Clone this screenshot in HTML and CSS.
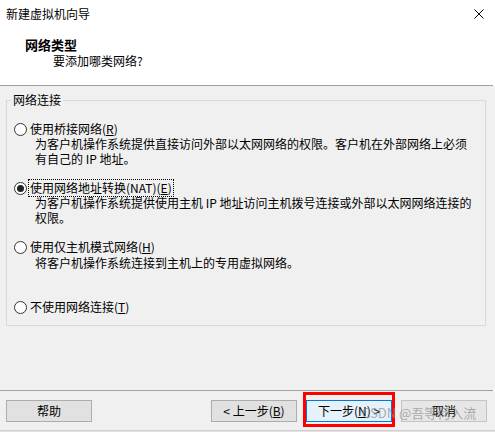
FILE: index.html
```html
<!DOCTYPE html>
<html lang="zh-CN">
<head>
<meta charset="utf-8">
<title>新建虚拟机向导</title>
<link rel="stylesheet" href="styles.css">
</head>
<body>
<div class="window">
  <div class="titlebar">
    <span class="title">新建虚拟机向导</span>
    <svg class="close" width="10" height="10" viewBox="0 0 10 10"><path d="M0.5 0.5 L9.5 9.5 M9.5 0.5 L0.5 9.5" stroke="#000" stroke-width="1" fill="none"/></svg>
  </div>
  <div class="header">
    <div class="h-title">网络类型</div>
    <div class="h-sub">要添加哪类网络?</div>
  </div>
  <div class="sep"></div>
  <div class="body">
    <fieldset class="group">
      <legend>网络连接</legend>
      <div class="options">
        <div class="opt opt-gap">
          <div class="row"><span class="radio"></span><span class="label">使用桥接网络(<u>R</u>)</span></div>
          <div class="desc">为客户机操作系统提供直接访问外部以太网网络的权限。客户机在外部网络上必须<br>有自己的 IP 地址。</div>
        </div>
        <div class="opt opt-gap">
          <div class="row"><span class="radio checked"></span><span class="label focus">使用网络地址转换(NAT)(<u>E</u>)</span></div>
          <div class="desc">为客户机操作系统提供使用主机 IP 地址访问主机拨号连接或外部以太网网络连接的<br>权限。</div>
        </div>
        <div class="opt opt-gap-lg">
          <div class="row"><span class="radio"></span><span class="label">使用仅主机模式网络(<u>H</u>)</span></div>
          <div class="desc desc-shift">将客户机操作系统连接到主机上的专用虚拟网络。</div>
        </div>
        <div class="opt">
          <div class="row"><span class="radio"></span><span class="label">不使用网络连接(<u>T</u>)</span></div>
        </div>
      </div>
    </fieldset>
  </div>
  <div class="sep sep-bottom"></div>
  <div class="footer">
    <button class="btn">帮助</button>
    <div class="btn-group">
      <button class="btn">&lt; 上一步(<u>B</u>)</button>
      <div class="mark"><button class="btn btn-default">下一步(<u>N</u>) &gt;</button></div>
      <button class="btn btn-light">取消</button>
    </div>
    <span class="watermark">CSDN @吾等何入流</span>
  </div>
  <div class="bottom-edge"></div>
</div>
</body>
</html>
```
FILE: styles.css
```css
* { box-sizing: border-box; }
html, body { margin: 0; padding: 0; }
body {
  width: 495px;
  height: 432px;
  overflow: hidden;
  background: #ffffff;
  font-family: "Noto Sans CJK SC", "Liberation Sans", sans-serif;
  font-size: 12px;
  color: #000;
}
.window { width: 495px; height: 432px; display: flex; flex-direction: column; }
.titlebar {
  height: 27px;
  display: flex;
  align-items: center;
  justify-content: space-between;
  padding: 0 11px 0 6px;
  background: #fff;
}
.title { font-size: 12px; line-height: 14px; }
.close { display: block; margin-top: 1px; }
.header {
  height: 58px;
  padding: 10px 0 0 25px;
  background: #fff;
}
.h-title { font-size: 13px; font-weight: bold; line-height: 16px; }
.h-sub { font-size: 12px; line-height: 16px; margin-left: 28px; }
.sep { height: 1px; width: 493px; background: #a0a0a0; }
.body {
  height: 304px;
  background: #f0f0f0;
  padding: 6px 0 0 6px;
}
.group {
  margin: 0;
  width: 480px;
  border: 1px solid #d9d9d9;
  padding: 0 0 11px 4px;
}
.group legend {
  padding: 0 2px;
  line-height: 16px;
  font-size: 12px;
}
.options { padding: 14px 0 0 3px; }
.opt-gap { margin-bottom: 15px; }
.opt-gap-lg { margin-bottom: 30px; }
.row { display: flex; align-items: center; height: 14px; line-height: 14px; }
.radio {
  width: 13px;
  height: 13px;
  border: 1px solid #333;
  border-radius: 50%;
  background: #fff;
  margin-right: 3px;
  position: relative;
  flex: none;
}
.radio.checked::after {
  content: "";
  position: absolute;
  left: 2px;
  top: 2px;
  width: 7px;
  height: 7px;
  border-radius: 50%;
  background: #222;
}
.label { white-space: nowrap; }
.label.focus {
  outline: 1px dotted #000;
  outline-offset: 1px;
}
.desc { padding-left: 21px; line-height: 15px; white-space: nowrap; }
.desc-shift { padding-top: 1px; }
.sep-bottom { background: #a0a0a0; }
.footer {
  position: relative;
  height: 39px;
  background: #f0f0f0;
  display: flex;
  justify-content: space-between;
  align-items: flex-start;
  padding: 9px 8px 0 6px;
}
.btn-group { display: flex; gap: 9px; }
.btn {
  width: 86px;
  height: 22px;
  padding: 0;
  margin: 0;
  border: 1px solid #adadad;
  background: #e1e1e1;
  font-family: "Noto Sans CJK SC", "Liberation Sans", sans-serif;
  font-size: 12px;
  line-height: 18px;
  color: #000;
  display: block;
}
.btn-default { border-color: #0078d7; background: #e5f1fb; }
.btn-light { border-color: #c4c4c4; background: #e6e6e6; }
.mark { position: relative; }
.mark::after {
  content: "";
  position: absolute;
  left: -3px;
  right: -3px;
  top: -8px;
  bottom: -5px;
  border: 3px solid #ff0000;
  pointer-events: none;
}
.watermark {
  position: absolute;
  left: 362px;
  top: 14px;
  font-size: 13px;
  line-height: 16px;
  color: rgba(140, 140, 140, 0.7);
  white-space: nowrap;
  pointer-events: none;
}
.bottom-edge {
  height: 2px;
  background: #e3e3e3;
  border-top: 1px solid #cfcfcf;
}
```
